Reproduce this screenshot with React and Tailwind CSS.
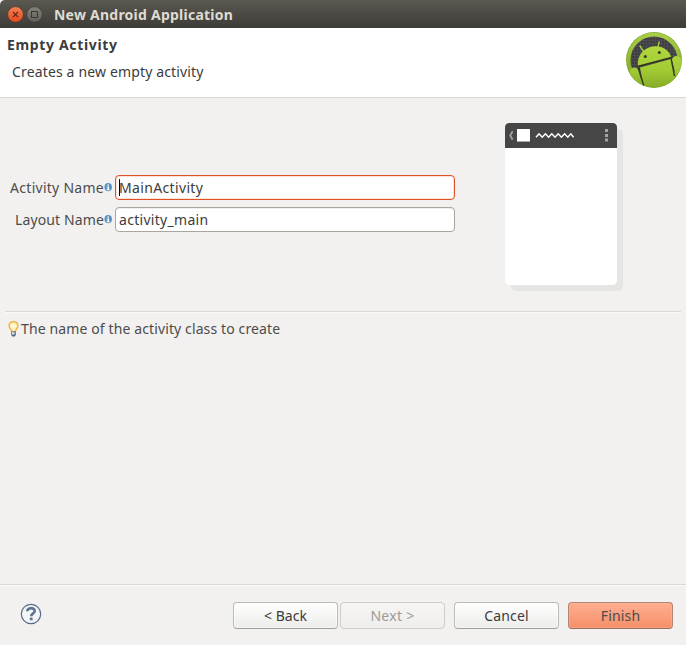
import React from 'react';

function AndroidLogo() {
  return (
    <svg width="56" height="56" viewBox="0 0 56 56" className="block">
      <defs>
        <linearGradient id="ring" x1="0" y1="0" x2="0" y2="1">
          <stop offset="0" stopColor="#a9cf45" />
          <stop offset="1" stopColor="#7b9f26" />
        </linearGradient>
        <linearGradient id="body" x1="0" y1="10" x2="0" y2="56" gradientUnits="userSpaceOnUse">
          <stop offset="0" stopColor="#b3da3e" />
          <stop offset=".6" stopColor="#a3cb34" />
          <stop offset="1" stopColor="#86ac28" />
        </linearGradient>
        <pattern id="mesh" width="3" height="3" patternUnits="userSpaceOnUse">
          <rect width="3" height="3" fill="#4c4c50" />
          <rect width="2" height="2" fill="#3d3d40" />
        </pattern>
        <clipPath id="disc"><circle cx="28" cy="28" r="27.5" /></clipPath>
      </defs>
      <circle cx="28" cy="28" r="28" fill="#88ab38" />
      <circle cx="28" cy="28" r="27.2" fill="url(#ring)" />
      <circle cx="28" cy="28" r="23.5" fill="url(#mesh)" />
      <g clipPath="url(#disc)">
        <path d="M17.500 19.500L14 14M31.500 16.500L33.200 10" stroke="#a5cc38" strokeWidth="1.400" strokeLinecap="round" />
        <path d="M12 34C9.500 13.500 39 6.500 45.300 25.300Z" fill="url(#body)" />
        <path d="M4 38Q7.500 34.500 10.500 36Q12 37 12.500 39L18 58H4Z" fill="url(#body)" />
        <path d="M14 35.500L45 27L52 58H18Z" fill="url(#body)" />
        <path d="M46 28Q46 25 49.500 24Q54 24 56 29V44L51 48Z" fill="url(#body)" />
        <path d="M11.500 34.500L45.500 25.500M12.500 35.500L17.800 54M45 26.500L48.500 44" stroke="#34391f" strokeWidth="1.300" fill="none" />
      </g>
      <circle cx="19.300" cy="24.400" r="1.500" fill="#353a25" />
      <circle cx="33.300" cy="20.600" r="1.500" fill="#353a25" />
    </svg>
  );
}

function InfoIcon() {
  return (
    <svg width="8" height="9" viewBox="0 0 8 9" className="block shrink-0">
      <ellipse cx="4.200" cy="4.200" rx="3.700" ry="4.100" fill="#5b92bd" />
      <path d="M3.400 1.500H5V2.700H3.400Z M2.700 3.400H5V6.300H5.800V7.200H2.600V6.300H3.500V4.300H2.700Z" fill="#fff" />
    </svg>
  );
}

function PhonePreview() {
  return (
    <svg width="118" height="168" viewBox="0 0 118 168" className="block">
      <rect x="6" y="6" width="112" height="162" rx="5" fill="#e5e5e3" />
      <rect width="112" height="162" rx="4.5" fill="#fff" />
      <path d="M0 25V4.500Q0 0 4.500 0H107.500Q112 0 112 4.500V25Z" fill="#464646" />
      <path d="M7.600 8.200L5.200 12.500L7.600 16.800" stroke="#a0a0a0" strokeWidth="1.800" fill="none" />
      <rect x="12" y="6" width="13" height="13" fill="#fff" />
      <rect x="12" y="18" width="13" height="1" fill="#aaa" />
      <path d="M31 14.200L34 10.800L37.200 14.200L40.400 10.800L43.600 14.200L46.800 10.800L50 14.200L53.200 10.800L56.400 14.200L59.600 10.800L62.800 14.200L65.800 10.800L68.600 14.200" stroke="#fff" strokeWidth="1.500" fill="none" />
      <path d="M100 6h3v3h-3zM100 11h3v3h-3zM100 15.500h3v3h-3z" fill="#a3a3a3" />
    </svg>
  );
}

function Bulb() {
  return (
    <svg width="11" height="16" viewBox="0 0 11 16" className="block shrink-0">
      <defs>
        <radialGradient id="glow"><stop offset="0" stopColor="#fffdf0" /><stop offset="1" stopColor="#ffe79d" /></radialGradient>
      </defs>
      <path d="M3.600 10.500C3.600 8.500 1 7.500 1 4.800C1 2.200 3 .6 5.500 .6S10 2.200 10 4.800C10 7.500 7.400 8.500 7.400 10.500Z" fill="url(#glow)" stroke="#ecae3e" strokeWidth="1.200" />
      <path d="M3.200 10.500H7.800V14L6.800 15.500H4.200L3.200 14Z" fill="#566a82" />
      <rect x="4" y="11.200" width="2.400" height="2.300" fill="#e6ecf2" />
    </svg>
  );
}

function Field({ label, value, focused, tracking, valueTracking }) {
  return (
    <div className="flex h-[25px] items-center">
      <div className="flex w-[115px] items-center justify-end pr-[3px]">
        <span className={tracking}>{label}</span>
        <InfoIcon />
      </div>
      <div className={`flex h-[25px] w-[340px] items-center rounded-[4px] border bg-white pl-[3px] text-[#3c3c3c] ${focused ? 'border-[#dd5227] shadow-[inset_0_0_0_1px_#fbe3da]' : 'border-[#aaa69e] shadow-[inset_0_1px_0_#eeeeec]'}`}>
        {focused && <span className="-mr-px h-[17px] w-px bg-black" />}
        <span className={valueTracking}>{value}</span>
      </div>
    </div>
  );
}

function Button({ children, className }) {
  return (
    <button className={`flex h-[27px] w-[105px] items-center justify-center rounded-[4px] border ${className}`}>
      {children}
    </button>
  );
}

const normal = 'border-[#bcbab6] border-b-[#a09e9a] bg-linear-to-b from-white to-[#ececea] text-[#3c3c3c] shadow-[inset_0_0_0_1px_#fff8]';

export default function App() {
  return (
    <div className="flex h-[645px] w-[686px] flex-col overflow-hidden bg-[#f2f1f0] font-['Noto_Sans',sans-serif] text-[14px] leading-[20px] whitespace-nowrap text-[#4c4c4c]">
      <header className="flex h-[28px] shrink-0 items-center rounded-tl-[5px] bg-linear-to-b from-[#5b5851] to-[#3d3c38] pl-[7px]">
        <svg width="36" height="17" viewBox="0 0 36 17" className="block">
          <defs>
            <linearGradient id="close" x1="0" y1="0" x2="0" y2="1"><stop offset="0" stopColor="#f78158" /><stop offset="1" stopColor="#df4a19" /></linearGradient>
            <linearGradient id="max" x1="0" y1="0" x2="0" y2="1"><stop offset="0" stopColor="#85827a" /><stop offset="1" stopColor="#605e58" /></linearGradient>
          </defs>
          <circle cx="8.500" cy="8.500" r="7.900" fill="url(#close)" stroke="#36342f" strokeWidth=".7" />
          <path d="M6 6L11 11M11 6L6 11" stroke="#5e2a15" strokeWidth="1.100" />
          <circle cx="27.500" cy="8.500" r="7.900" fill="url(#max)" stroke="#36342f" strokeWidth=".7" />
          <rect x="24.500" y="5.500" width="6" height="6" fill="none" stroke="#3a3935" />
        </svg>
        <h1 className="ml-[11px] pt-[2px] font-bold tracking-[0.24px] text-[#dfdbd2]">New Android Application</h1>
      </header>
      <section className="flex h-[70px] shrink-0 justify-between border-b border-[#d9d8d6] bg-white pr-[4px] pl-[7px]">
        <div className="pt-[7px]">
          <h2 className="font-bold tracking-[0.66px] text-[#3c3c3c]">Empty Activity</h2>
          <p className="mt-[7px] ml-[5px] tracking-[0.15px] text-[#3c3c3c]">Creates a new empty activity</p>
        </div>
        <div className="pt-[4px]"><AndroidLogo /></div>
      </section>
      <main className="mx-[5px] flex h-[214px] shrink-0 border-b border-[#d9d8d6] shadow-[0_1px_0_#fafafa]">
        <div className="-ml-[5px] flex w-[505px] flex-col gap-[7px] pt-[77px]">
          <Field label="Activity Name" value="MainActivity" focused tracking="tracking-[0.27px]" valueTracking="tracking-[0.35px]" />
          <Field label="Layout Name" value="activity_main" tracking="tracking-[0.12px]" valueTracking="tracking-[0.3px]" />
        </div>
        <div className="pt-[25px]"><PhonePreview /></div>
      </main>
      <div className="flex items-center gap-[2px] pt-[7px] pl-[8px]">
        <Bulb />
        <span className="tracking-[0.12px]">The name of the activity class to create</span>
      </div>
      <footer className="mt-auto flex h-[61px] shrink-0 items-center border-t border-[#d9d8d6] pr-[13px] pl-[20px] shadow-[inset_0_1px_0_#fafafa]">
        <svg width="22" height="22" viewBox="0 0 22 22" className="mb-[2px] block">
          <circle cx="11" cy="11" r="9.700" fill="#f4f5f7" stroke="#566c88" strokeWidth="1.200" />
          <path d="M7.300 8.300C7.300 4.200 14.700 4.200 14.700 7.900C14.700 10.400 11.200 10.500 11.200 13.200" fill="none" stroke="#60728f" strokeWidth="2.600" />
          <rect x="9.800" y="14.600" width="2.800" height="2.700" fill="#60728f" />
        </svg>
        <div className="ml-auto flex pt-[1px]">
          <Button className={normal}>&lt; Back</Button>
          <Button className="ml-[2px] border-[#cfcdca] bg-linear-to-b from-[#f6f5f4] to-[#efeeec] tracking-[0.3px] text-[#9c9b99]">Next &gt;</Button>
          <Button className={`ml-[9px] tracking-[0.15px] ${normal}`}>Cancel</Button>
          <Button className="ml-[9px] border-[#b58472] border-b-[#9b6f5d] bg-linear-to-b from-[#feae90] to-[#f58f68] tracking-[0.15px] text-[#4c4c4c] shadow-[inset_0_0_0_1px_#ffb79a77]">Finish</Button>
        </div>
      </footer>
    </div>
  );
}
